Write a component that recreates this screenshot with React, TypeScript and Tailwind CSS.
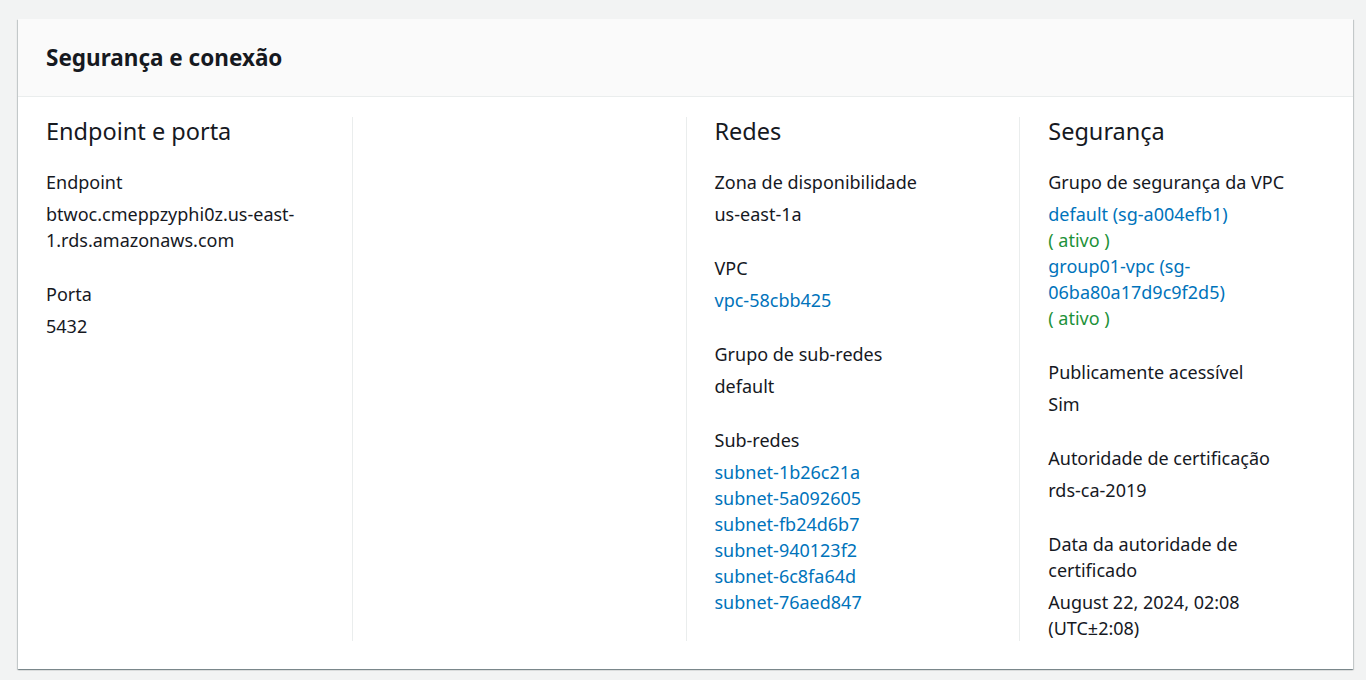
import React from 'react';

type Line = { text: string; tone?: 'link' | 'ok' | 'plain' };
type Field = { label: string; lines: Line[] };

const tone = {
  plain: 'text-[#16191f]',
  link: 'text-[#0073bb]',
  ok: 'text-[#1d9139]',
};

const columns: { title?: string; fields: Field[] }[] = [
  {
    title: 'Endpoint e porta',
    fields: [
      { label: 'Endpoint', lines: [{ text: 'btwoc.cmeppzyphi0z.us-east-1.rds.amazonaws.com' }] },
      { label: 'Porta', lines: [{ text: '5432' }] },
    ],
  },
  { fields: [] },
  {
    title: 'Redes',
    fields: [
      { label: 'Zona de disponibilidade', lines: [{ text: 'us-east-1a' }] },
      { label: 'VPC', lines: [{ text: 'vpc-58cbb425', tone: 'link' }] },
      { label: 'Grupo de sub-redes', lines: [{ text: 'default' }] },
      {
        label: 'Sub-redes',
        lines: [
          'subnet-1b26c21a',
          'subnet-5a092605',
          'subnet-fb24d6b7',
          'subnet-940123f2',
          'subnet-6c8fa64d',
          'subnet-76aed847',
        ].map((s) => ({ text: s, tone: 'link' as const })),
      },
    ],
  },
  {
    title: 'Segurança',
    fields: [
      {
        label: 'Grupo de segurança da VPC',
        lines: [
          { text: 'default (sg-a004efb1)', tone: 'link' },
          { text: '( ativo )', tone: 'ok' },
          { text: 'group01-vpc (sg-06ba80a17d9c9f2d5)', tone: 'link' },
          { text: '( ativo )', tone: 'ok' },
        ],
      },
      { label: 'Publicamente acessível', lines: [{ text: 'Sim' }] },
      { label: 'Autoridade de certificação', lines: [{ text: 'rds-ca-2019' }] },
      { label: 'Data da autoridade de certificado', lines: [{ text: 'August 22, 2024, 02:08 (UTC±2:08)' }] },
    ],
  },
];

const App: React.FC = () => {
  return (
    <div
      className="min-h-screen bg-[#f2f3f3] pl-[18px] pr-[13px] pt-[19px] pb-[10px] text-[18px] leading-[26px] text-[#16191f]"
      style={{ fontFamily: '"Noto Sans", "Open Sans", sans-serif' }}
    >
      <div className="bg-white shadow-[0_1px_1px_0_rgba(0,28,36,0.3),1px_1px_1px_0_rgba(0,28,36,0.15),-1px_1px_1px_0_rgba(0,28,36,0.15)]">
        <div className="h-[78px] bg-[#fafafa] border-b border-[#eaeded] px-7 flex items-center">
          <h2 className="text-[22.5px] font-bold text-[#16191f] leading-[30px]">Segurança e conexão</h2>
        </div>
        <div className="grid grid-cols-4 pt-5 pb-[28px]">
          {columns.map((col, i) => (
            <div key={i} className={i === 0 ? 'px-7' : 'px-7 border-l border-[#eaeded]'}>
              {col.title && (
                <h3 className="text-[23.5px] leading-[28px] text-[#16191f] mb-[24px]">{col.title}</h3>
              )}
              <div className="flex flex-col gap-[28px]">
                {col.fields.map((f) => (
                  <div key={f.label}>
                    <div className="text-[#16191f]">{f.label}</div>
                    <div className="mt-[6px]">
                      {f.lines.map((l, j) => (
                        <div key={j} className={tone[l.tone ?? 'plain'] + ' break-words'}>
                          {l.text}
                        </div>
                      ))}
                    </div>
                  </div>
                ))}
              </div>
            </div>
          ))}
        </div>
      </div>
    </div>
  );
};

export default App;
